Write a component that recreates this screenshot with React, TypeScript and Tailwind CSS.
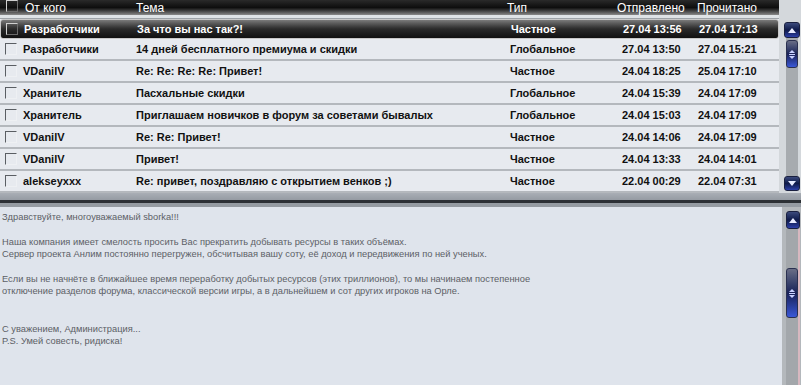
import React from 'react';

type Msg = {
  from: string;
  subject: string;
  type: string;
  sent: string;
  read: string;
};

const messages: Msg[] = [
  { from: 'Разработчики', subject: 'За что вы нас так?!', type: 'Частное', sent: '27.04 13:56', read: '27.04 17:13' },
  { from: 'Разработчики', subject: '14 дней бесплатного премиума и скидки', type: 'Глобальное', sent: '27.04 13:50', read: '27.04 15:21' },
  { from: 'VDanilV', subject: 'Re: Re: Re: Re: Привет!', type: 'Частное', sent: '24.04 18:25', read: '25.04 17:10' },
  { from: 'Хранитель', subject: 'Пасхальные скидки', type: 'Глобальное', sent: '24.04 15:39', read: '24.04 17:09' },
  { from: 'Хранитель', subject: 'Приглашаем новичков в форум за советами бывалых', type: 'Глобальное', sent: '24.04 15:03', read: '24.04 17:09' },
  { from: 'VDanilV', subject: 'Re: Re: Привет!', type: 'Частное', sent: '24.04 14:06', read: '24.04 17:09' },
  { from: 'VDanilV', subject: 'Привет!', type: 'Частное', sent: '24.04 13:33', read: '24.04 14:01' },
  { from: 'alekseyxxx', subject: 'Re: привет, поздравляю с открытием венков ;)', type: 'Частное', sent: '22.04 00:29', read: '22.04 07:31' },
];

const Check: React.FC<{ light?: boolean }> = ({ light }) => (
  <div
    className={
      light
        ? 'w-[12px] h-[12px] border border-t-[#d0d0d0] border-l-[#d0d0d0] border-b-[#6a6a6a] border-r-[#6a6a6a]'
        : 'w-[12px] h-[12px] border border-t-[#5a5e63] border-l-[#5a5e63] border-b-[#eef0f3] border-r-[#eef0f3]'
    }
  />
);

const ScrollBtn: React.FC<{ down?: boolean; h: string }> = ({ down, h }) => (
  <div
    className={`w-full ${h} shrink-0 rounded-[3px] bg-gradient-to-b from-[#3c4a7c] via-[#0f1a4a] to-[#2c3fa8] border border-[#1a2040] flex items-center justify-center`}
  >
    <svg width="8" height="5" viewBox="0 0 8 5">
      {down ? <path d="M0 0h8L4 5z" fill="#e8ecff" /> : <path d="M0 5h8L4 0z" fill="#e8ecff" />}
    </svg>
  </div>
);

const Thumb: React.FC<{ h: string }> = ({ h }) => (
  <div
    className={`w-full ${h} shrink-0 rounded-[3px] bg-gradient-to-b from-[#6a6e86] via-[#1a2258] to-[#3a58d8] border border-[#2a3050] flex items-center justify-center`}
  >
    <svg width="6" height="9" viewBox="0 0 6 9">
      <path d="M0 3h6L3 0z" fill="#c8d0ff" />
      <path d="M0 4h6v1H0z" fill="#c8d0ff" />
      <path d="M0 6h6L3 9z" fill="#c8d0ff" />
    </svg>
  </div>
);

export default function App() {
  return (
    <div className="w-[801px] h-[385px] overflow-hidden bg-[#d8dce0] flex flex-col" style={{ fontFamily: '"Liberation Sans", Arial, sans-serif' }}>
      {/* list */}
      <div className="h-[193px] shrink-0 flex">
        <div className="w-[779px] flex flex-col bg-[#e7eaef]">
          <div className="h-[15px] flex items-center text-white text-[12px] leading-none bg-gradient-to-b from-[#2a2a2a] via-[#0e0e0e] to-[#8a8a8a]">
            <div className="w-[25px] pl-[6px] -mt-[4px]"><Check light /></div>
            <div className="w-[111px]">От кого</div>
            <div className="w-[371px]">Тема</div>
            <div className="w-[110px]">Тип</div>
            <div className="w-[80px]">Отправлено</div>
            <div>Прочитано</div>
          </div>
          <div className="h-[3px] bg-[#dfe3e6]" />
          <div className="h-[1px] bg-[#9ea3a8]" />
          {messages.map((m, i) => {
            const sel = i === 0;
            return (
              <div
                key={i}
                className={
                  sel
                    ? 'h-[20px] flex items-center text-[11px] font-bold text-white rounded-[3px] border border-[#c8c8c8] bg-gradient-to-b from-[#7a7a7a] via-[#2a2a2a] to-[#111]'
                    : 'h-[22px] flex items-center text-[11px] font-bold text-[#111] border-b-2 border-[#b4b8bd]'
                }
              >
                <div className="w-[23px] pl-[5px]"><Check light={sel} /></div>
                <div className="w-[113px]">{m.from}</div>
                <div className="w-[374px] whitespace-nowrap">{m.subject}</div>
                <div className="w-[112px]">{m.type}</div>
                <div className="w-[76px]">{m.sent}</div>
                <div>{m.read}</div>
              </div>
            );
          })}
        </div>
        <div className="flex-1 pl-[5px] pr-[1px] pt-[22px] pb-[2px] flex flex-col bg-[#d4d8dc]">
          <ScrollBtn h="h-[16px]" />
          <div className="flex-1 flex flex-col bg-[#a7abaf] mx-[2px] py-[2px]">
            <Thumb h="h-[28px]" />
          </div>
          <ScrollBtn down h="h-[15px]" />
        </div>
      </div>
      {/* splitter */}
      <div className="h-[7px] shrink-0 bg-gradient-to-b from-[#a9aeb5] to-[#959ba3]" />
      <div className="h-[3px] shrink-0 bg-[#2c3035]" />
      <div className="h-[4px] shrink-0 bg-[#959ba2]" />
      {/* body */}
      <div className="h-[178px] flex">
        <div className="w-[782px] bg-[#dfe4ec] pl-[2px] pt-[4px] text-[9.3px] leading-[12.4px] text-[#5c6066]">
          <div>Здравствуйте, многоуважаемый sborka!!!</div>
          <div>&nbsp;</div>
          <div>Наша компания имеет смелость просить Вас прекратить добывать ресурсы в таких объёмах.</div>
          <div>Сервер проекта Анлим постоянно перегружен, обсчитывая вашу соту, её доход и передвижения по ней ученых.</div>
          <div>&nbsp;</div>
          <div>Если вы не начнёте в ближайшее время переработку добытых ресурсов (этих триллионов), то мы начинаем постепенное</div>
          <div>отключение разделов форума, классической версии игры, а в дальнейшем и сот других игроков на Орле.</div>
          <div>&nbsp;</div>
          <div>&nbsp;</div>
          <div>С уважением, Администрация...</div>
          <div>P.S. Умей совесть, ридиска!</div>
        </div>
        <div className="w-[19px] h-[178px] pl-[4px] pr-[1px] pt-[4px] flex flex-col bg-[#b4b8bc]">
          <ScrollBtn h="h-[18px]" />
          <div className="h-[156px] flex flex-col bg-[#a3a7ab] border-r-2 border-[#d8b8c0] pt-[39px]">
            <Thumb h="h-[50px]" />
          </div>
        </div>
      </div>
    </div>
  );
}
